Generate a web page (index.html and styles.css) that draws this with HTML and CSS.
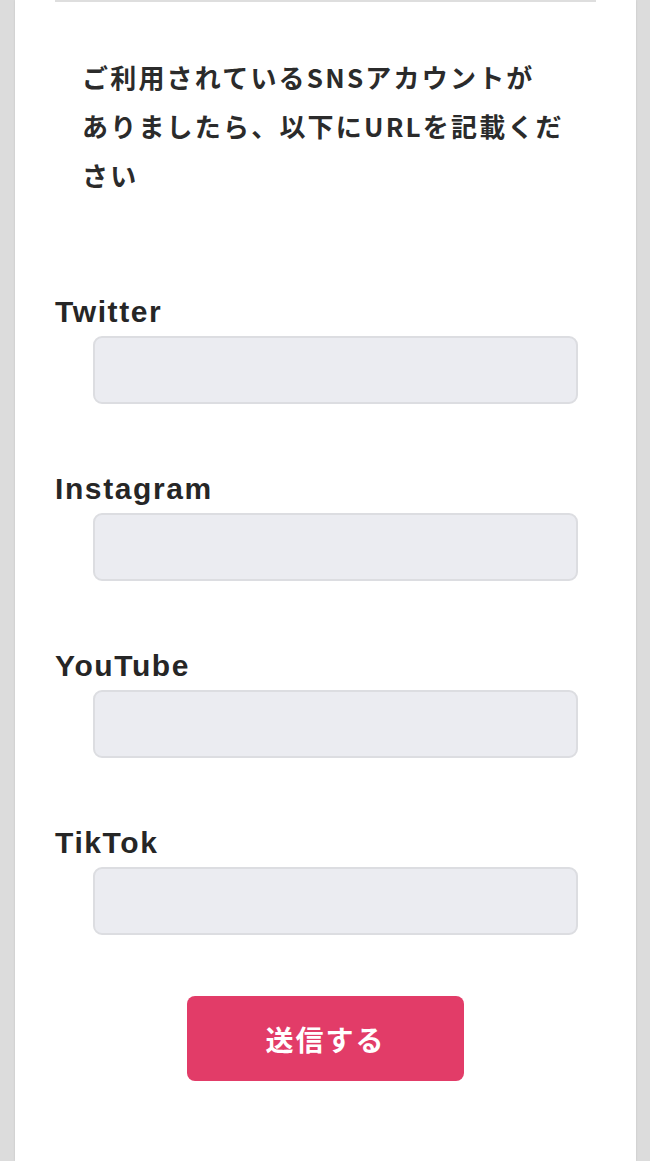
FILE: index.html
```html
<!DOCTYPE html>
<html lang="ja">
<head>
    <meta charset="UTF-8">
    <meta name="viewport" content="width=device-width, initial-scale=1.0">
    <title>SNSアカウント</title>
    <link rel="stylesheet" href="styles.css">
</head>
<body>
    <div class="card">
        <div class="divider"></div>

        <p class="lead">ご利用されているSNSアカウントが<br>ありましたら、以下にURLを記載ください</p>

        <form class="sns-form">
            <div class="field">
                <label for="twitter">Twitter</label>
                <input type="url" id="twitter" name="twitter">
            </div>
            <div class="field">
                <label for="instagram">Instagram</label>
                <input type="url" id="instagram" name="instagram">
            </div>
            <div class="field">
                <label for="youtube">YouTube</label>
                <input type="url" id="youtube" name="youtube">
            </div>
            <div class="field">
                <label for="tiktok">TikTok</label>
                <input type="url" id="tiktok" name="tiktok">
            </div>

            <div class="actions">
                <button type="submit" class="submit">送信する</button>
            </div>
        </form>
    </div>
</body>
</html>
```

FILE: styles.css
```css
body {
    margin: 0;
    background-color: #dcdcdc;
    font-family: "Noto Sans CJK JP", "Liberation Sans", sans-serif;
    color: #2b2b2b;
}
.card {
    margin: 0 14px 0 15px;
    min-height: 1161px;
    background: #fff;
    padding: 0 40px;
    box-shadow: 0 0 2px rgba(0,0,0,0.12);
}
.divider {
    height: 2px;
    background-color: #dedede;
}
.lead {
    margin: 50px 0 0;
    padding: 0 20px 0 27px;
    font-size: 26px;
    font-weight: bold;
    line-height: 49px;
    letter-spacing: 2.2px;
}
.sns-form {
    margin-top: 95px;
}
.field {
    margin-bottom: 67px;
}
.field label {
    display: block;
    font-family: "Liberation Sans", Arial, sans-serif;
    font-size: 30px;
    font-weight: bold;
    line-height: 36px;
    letter-spacing: 1.6px;
    color: #262626;
}
.field input {
    display: block;
    box-sizing: border-box;
    width: calc(100% - 56px);
    height: 68px;
    margin: 6px 18px 0 38px;
    background-color: #ebecf1;
    border: 2px solid #dcdde1;
    border-radius: 9px;
}
.actions {
    text-align: center;
    margin-top: -6px;
}
.submit {
    width: 277px;
    height: 85px;
    background-color: #e23c68;
    color: #fff;
    border: none;
    border-radius: 8px;
    font-family: "Noto Sans CJK JP", sans-serif;
    font-size: 28px;
    font-weight: bold;
    letter-spacing: 2px;
    cursor: pointer;
}
```
